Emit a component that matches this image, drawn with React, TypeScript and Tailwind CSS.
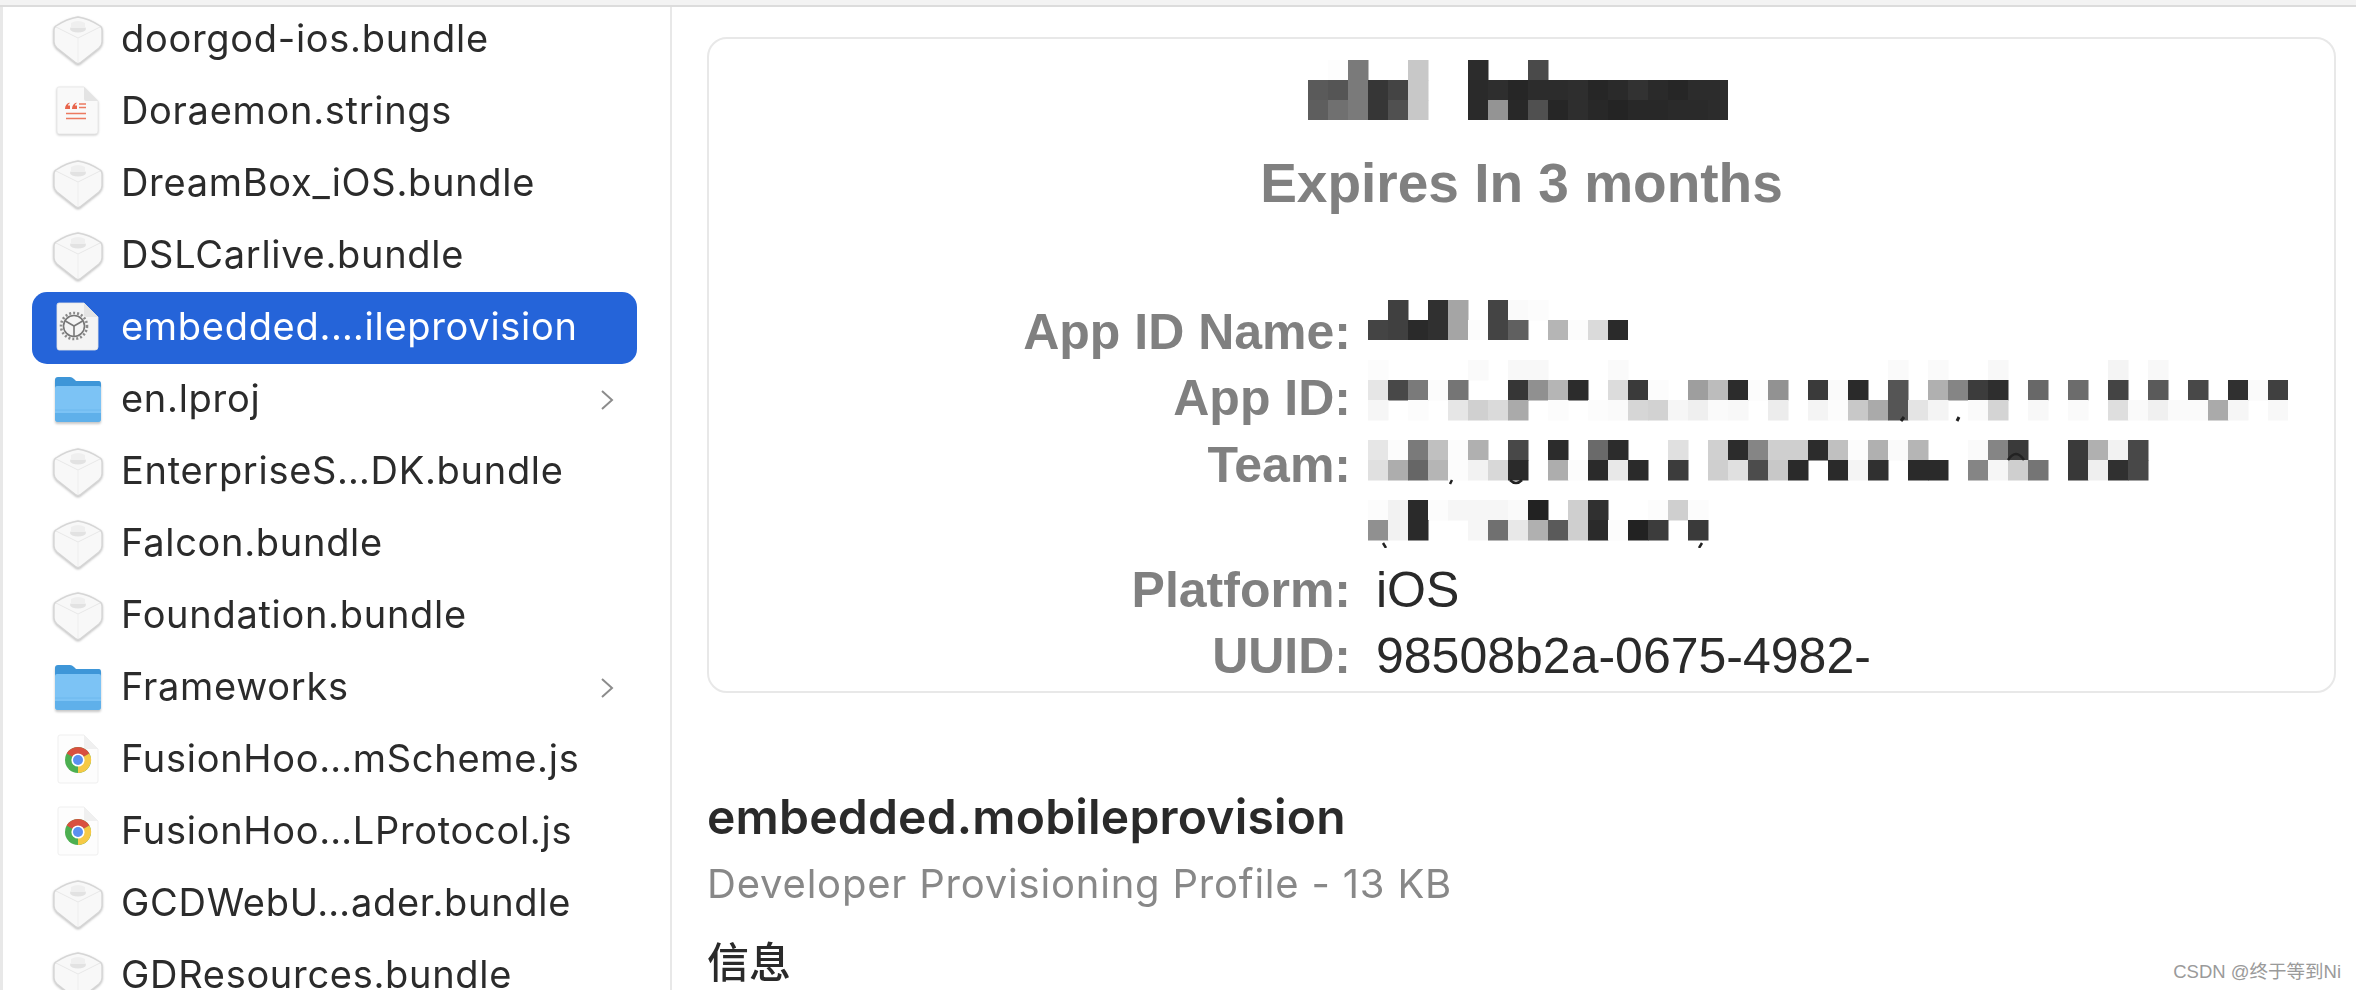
import React from "react";

type Kind = "bundle" | "strings" | "provision" | "folder" | "chrome";

const files: { name: string; kind: Kind; selected?: boolean }[] = [
  { name: "doorgod-ios.bundle", kind: "bundle" },
  { name: "Doraemon.strings", kind: "strings" },
  { name: "DreamBox_iOS.bundle", kind: "bundle" },
  { name: "DSLCarlive.bundle", kind: "bundle" },
  { name: "embedded.…ileprovision", kind: "provision", selected: true },
  { name: "en.lproj", kind: "folder" },
  { name: "EnterpriseS…DK.bundle", kind: "bundle" },
  { name: "Falcon.bundle", kind: "bundle" },
  { name: "Foundation.bundle", kind: "bundle" },
  { name: "Frameworks", kind: "folder" },
  { name: "FusionHoo…mScheme.js", kind: "chrome" },
  { name: "FusionHoo…LProtocol.js", kind: "chrome" },
  { name: "GCDWebU…ader.bundle", kind: "bundle" },
  { name: "GDResources.bundle", kind: "bundle" },
];

// Each mosaic row is a list of grey levels, "" means the cell stays white
const titleCells = [
  ["", "fdfdfd", "7a7a7a", "", "", "c8c8c8", "", "", "2c2c2c", "", "", "4a4a4a"],
  ["5a5a5a", "555555", "7a7a7a", "363636", "444444", "c8c8c8", "", "", "2a2a2a", "2e2e2e", "262626", "2c2c2c", "2c2c2c", "2e2e2e", "262626", "2a2a2a", "323232", "2a2a2a", "262626", "2c2c2c", "2c2c2c"],
  ["5e5e5e", "707070", "7a7a7a", "363636", "505050", "c8c8c8", "", "", "2a2a2a", "949494", "282828", "505050", "262626", "2e2e2e", "282828", "242424", "282828", "282828", "2a2a2a", "2a2a2a", "2c2c2c"],
];

const appNameCells = [
  ["", "404040", "", "303030", "a5a5a5", "", "444444", "fafafa", "fcfcfc"],
  ["444444", "404040", "2a2a2a", "303030", "a5a5a5", "fcfcfc", "444444", "606060", "", "b5b5b5", "fcfcfc", "dadada", "2a2a2a"],
];

const appIdCells = [
  ["fcfcfc", "", "", "", "", "fafafa", "", "f8f8f8", "f8f8f8", "", "", "", "fafafa", "", "", "", "", "", "", "", "", "", "", "", "", "", "fafafa", "", "fafafa", "", "", "f8f8f8", "", "", "", "", "", "f4f4f4", "", "f8f8f8"],
  ["e6e6e6", "484848", "7a7a7a", "fcfcfc", "757575", "", "", "363636", "909090", "b5b5b5", "2c2c2c", "", "dcdcdc", "3a3a3a", "fcfcfc", "", "9e9e9e", "bcbcbc", "2c2c2c", "fcfcfc", "929292", "", "3a3a3a", "fafafa", "2a2a2a", "", "555555", "", "b0b0b0", "858585", "3c3c3c", "2e2e2e", "", "686868", "", "6c6c6c", "", "444444", "", "5a5a5a", "", "484848", "", "303030", "fafafa", "404040"],
  ["f6f6f6", "", "fcfcfc", "", "e6e6e6", "d0d0d0", "dadada", "aaaaaa", "", "fcfcfc", "", "fcfcfc", "fafafa", "d6d6d6", "d2d2d2", "f6f6f6", "efefef", "fafafa", "f8f8f8", "", "ececec", "", "f4f4f4", "fcfcfc", "c8c8c8", "aaaaaa", "555555", "e4e4e4", "f4f4f4", "", "fafafa", "d4d4d4", "", "f8f8f8", "", "fafafa", "", "dedede", "fafafa", "f0f0f0", "fafafa", "fafafa", "aaaaaa", "f6f6f6", "", "f8f8f8"],
];

const teamCells = [
  ["e6e6e6", "fcfcfc", "7a7a7a", "c0c0c0", "fcfcfc", "b0b0b0", "", "484848", "", "2c2c2c", "", "6a6a6a", "2c2c2c", "", "", "e0e0e0", "", "d0d0d0", "2c2c2c", "858585", "cfcfcf", "cfcfcf", "2c2c2c", "c0c0c0", "fcfcfc", "b0b0b0", "fafafa", "b5b5b5", "", "", "fafafa", "858585", "3a3a3a", "", "", "3a3a3a", "b0b0b0", "f2f2f2", "484848"],
  ["e0e0e0", "adadad", "666666", "b5b5b5", "fcfcfc", "f2f2f2", "d8d8d8", "2a2a2a", "", "adadad", "fcfcfc", "2a2a2a", "e8e8e8", "2a2a2a", "", "3c3c3c", "", "cfcfcf", "e0e0e0", "4c4c4c", "c8c8c8", "2a2a2a", "", "2a2a2a", "f4f4f4", "303030", "", "2a2a2a", "2a2a2a", "", "858585", "f6f6f6", "cfcfcf", "757575", "", "383838", "efefef", "303030", "484848"],
  [],
  ["fcfcfc", "f2f2f2", "2a2a2a", "fcfcfc", "f6f6f6", "f6f6f6", "f6f6f6", "fafafa", "222222", "", "cfcfcf", "303030", "", "", "fcfcfc", "cfcfcf", "fcfcfc"],
  ["909090", "f2f2f2", "2a2a2a", "", "", "f6f6f6", "707070", "e8e8e8", "b0b0b0", "5a5a5a", "cfcfcf", "2a2a2a", "fcfcfc", "222222", "3c3c3c", "", "3a3a3a"],
];

function Mosaic({ cells, width, height, children, className }: { cells: string[][]; width: number; height: number; children?: React.ReactNode; className?: string }) {
  return (
    <svg width={width} height={height} viewBox={`0 0 ${width} ${height}`} className={className}>
      {cells.map((row, y) =>
        row.map((c, x) => (c ? <rect key={`${x}-${y}`} x={x * 20} y={y * 20} width={20.5} height={20.5} fill={`#${c}`} /> : null)),
      )}
      {children}
    </svg>
  );
}

function BundleIcon() {
  return (
    <svg width="52" height="52" viewBox="0 0 52 52" className="drop-shadow-[0_1px_1px_rgba(0,0,0,0.25)]">
      <path d="M26 3 C 33 4 42 8 48 12 Q 50 13 50 16 L 50 28 Q 50 31 47 34 L 28 49 Q 26 50 24 49 L 5 34 Q 2 31 2 28 L 2 16 Q 2 13 4 12 C 10 8 19 4 26 3 Z" fill="#f8f8f8" stroke="#d6d6d6" strokeWidth="1.4" />
      <path d="M4 13 L26 24 L48 13" fill="none" stroke="#e8e8e8" strokeWidth="1" />
      <path d="M26 24 L26 49" fill="none" stroke="#eeeeee" strokeWidth="1" />
      <ellipse cx="26" cy="15" rx="8" ry="3.4" fill="#e2e2e2" />
      <path d="M19 14 L19 9 Q26 5 33 9 L33 14" fill="#efefef" />
    </svg>
  );
}

function PageShape({ fill = "#f9f9f9" }: { fill?: string }) {
  return (
    <>
      <path d="M7 1 L32 1 L46 15 L46 45 Q46 48 43 48 L7 48 Q5 48 5 45 L5 3 Q5 1 7 1 Z" fill={fill} stroke="#e6e6e6" strokeWidth="0.8" />
      <path d="M32 1 L46 15 L34 15 Q32 15 32 13 Z" fill="#e4e4e4" />
    </>
  );
}

function StringsIcon() {
  return (
    <svg width="52" height="52" viewBox="0 0 52 52" className="drop-shadow-[0_1px_1px_rgba(0,0,0,0.2)]">
      <PageShape />
      <path d="M17.5 16.5 Q13 18 13 23 L18 23 L18 19.5 L16 19.5 Q16 18 17.5 17.5 Z M24.5 16.5 Q20 18 20 23 L25 23 L25 19.5 L23 19.5 Q23 18 24.5 17.5 Z" fill="#e8654c" />
      <path d="M27 18 H34 M27 21.5 H34 M14 27.5 H34 M14 32.5 H34" stroke="#ec7a60" strokeWidth="1.5" />
    </svg>
  );
}

function ProvisionIcon() {
  const spokes = [90, 210, 330];
  return (
    <svg width="52" height="52" viewBox="0 0 52 52">
      <PageShape fill="#f4f4f4" />
      <circle cx="22" cy="24" r="13" fill="none" stroke="#8a8a8a" strokeWidth="2.6" strokeDasharray="2 2" />
      <circle cx="22" cy="24" r="10.5" fill="none" stroke="#777777" strokeWidth="1.6" />
      {spokes.map((a) => (
        <line key={a} x1="22" y1="24" x2={22 + 10 * Math.cos((a * Math.PI) / 180)} y2={24 + 10 * Math.sin((a * Math.PI) / 180)} stroke="#777777" strokeWidth="1.6" />
      ))}
    </svg>
  );
}

function FolderIcon() {
  return (
    <svg width="52" height="52" viewBox="0 0 52 52" className="drop-shadow-[0_2px_1px_rgba(0,0,0,0.22)]">
      <path d="M3 6 Q3 3 6 3 L18 3 Q20 3 22 5 L24 7 L47 7 Q49 7 49 10 L49 20 L3 20 Z" fill="#3e96d8" />
      <path d="M3 14 Q3 12 5 12 L47 12 Q49 12 49 14 L49 45 Q49 48 46 48 L6 48 Q3 48 3 45 Z" fill="#7cc3f5" />
      <path d="M3 39 L49 39 L49 45 Q49 48 46 48 L6 48 Q3 48 3 45 Z" fill="#5fb0ea" />
      <path d="M3 36 H49" stroke="#6cb8ee" strokeWidth="1" />
    </svg>
  );
}

function ChromeIcon() {
  return (
    <svg width="52" height="52" viewBox="0 0 52 52">
      <path d="M8 1 L32 1 L46 15 L46 47 Q46 49 44 49 L8 49 Q6 49 6 47 L6 3 Q6 1 8 1 Z" fill="#fdfdfd" stroke="#efefef" strokeWidth="1" />
      <path d="M32 1 L46 15 L34 15 Q32 15 32 13 Z" fill="#f0f0f0" />
      <circle cx="26" cy="26" r="13" fill="#4caf50" />
      <path d="M26 26 L14.7 19.5 A13 13 0 0 1 37.3 19.5 Z" fill="#d9503f" />
      <path d="M26 26 L37.3 19.5 A13 13 0 0 1 26 39 Z" fill="#f6c945" />
      <circle cx="26" cy="26" r="6.6" fill="#ffffff" />
      <circle cx="26" cy="26" r="5" fill="#5b90f0" />
    </svg>
  );
}

function FileIcon({ kind }: { kind: Kind }) {
  if (kind === "bundle") return <BundleIcon />;
  if (kind === "strings") return <StringsIcon />;
  if (kind === "provision") return <ProvisionIcon />;
  if (kind === "folder") return <FolderIcon />;
  return <ChromeIcon />;
}

function Chevron() {
  return (
    <svg width="14" height="22" viewBox="0 0 14 22" className="mr-[23px] ml-auto">
      <path d="M2 2 L12 11 L2 20" fill="none" stroke="#8c8c8c" strokeWidth="2" />
    </svg>
  );
}

function FileRow({ name, kind, selected }: { name: string; kind: Kind; selected?: boolean }) {
  return (
    <div className={`flex h-[72px] items-center gap-[17px] rounded-[15px] pl-[20px] ${selected ? "bg-[#2564d9] text-white" : "text-[#2b2b2b]"}`}>
      <FileIcon kind={kind} />
      <span className="-mt-[3px] text-[38px] tracking-[0.7px] whitespace-nowrap">{name}</span>
      {kind === "folder" && <Chevron />}
    </div>
  );
}

function InfoRow({ label, rowClass, children }: { label: string; rowClass: string; children: React.ReactNode }) {
  return (
    <div className={`flex ${rowClass}`}>
      <div className="w-[642px] shrink-0 text-right font-bold text-[#808080]">{label}</div>
      <div className="ml-[17px] min-w-0">{children}</div>
    </div>
  );
}

export default function App() {
  return (
    <div className="relative flex h-[990px] w-[2356px] flex-col overflow-hidden bg-white font-['Inter',sans-serif]">
      <div className="h-[7px] shrink-0 border-b-2 border-[#dcdcdc] bg-[#f3f3f3]" />
      <div className="flex min-h-0 flex-1 blur-[0.5px]">
        {/* file list */}
        <div className="w-[672px] shrink-0 border-r-2 border-l-[3px] border-r-[#e8e8e8] border-l-[#e8e8e8] pr-[33px] pl-[29px]">
          <div className="-mt-[3px]">
            {files.map((f) => (
              <FileRow key={f.name} {...f} />
            ))}
          </div>
        </div>

        {/* preview pane */}
        <div className="min-w-0 flex-1 pt-[30px] pr-[20px] pl-[35px]">
          <div className="h-[656px] rounded-[20px] border-2 border-[#e8e8e8] font-['Liberation_Sans',sans-serif] text-[50px] leading-[67px] text-[#2a2a2a]">
            <div className="flex justify-center pt-[21px] pr-[8px]">
              <Mosaic cells={titleCells} width={420} height={60} />
            </div>
            <div className="mt-[31px] text-center text-[55px] leading-[64px] font-bold text-[#808080]">Expires In 3 months</div>
            <div className="mt-[84px]">
              <InfoRow label="App ID Name:" rowClass="h-[66px]">
                <Mosaic cells={appNameCells} width={260} height={40} className="mt-[1px]" />
              </InfoRow>
              <InfoRow label="App ID:" rowClass="h-[67px]">
                <Mosaic cells={appIdCells} width={920} height={62} className="-mt-[5px]">
                  <path d="M536 57 L533 61 M591 57 L589 61" stroke="#222222" strokeWidth="3" />
                </Mosaic>
              </InfoRow>
              <InfoRow label="Team:" rowClass="h-[125px]">
                <Mosaic cells={teamCells} width={800} height={108} className="mt-[8px]">
                  <path d="M84 40 L82 44 M142 40 Q148 46 154 40 M640 20 Q648 8 656 20" fill="none" stroke="#222222" strokeWidth="2.5" />
                  <path d="M15 103 L18 108 M334 103 L331 108" fill="none" stroke="#222222" strokeWidth="2.5" />
                </Mosaic>
              </InfoRow>
              <InfoRow label="Platform:" rowClass="h-[66px]">
                <span className="pl-[8px]">iOS</span>
              </InfoRow>
              <InfoRow label="UUID:" rowClass="h-[67px]">
                <span className="pl-[8px]">98508b2a-0675-4982-</span>
              </InfoRow>
            </div>
          </div>

          <div className="mt-[96px] text-[48px] leading-[56px] font-semibold tracking-[0.2px] text-[#2a2a2a]">embedded.mobileprovision</div>
          <div className="mt-[16px] text-[40px] leading-[46px] tracking-[0.8px] text-[#888888]">Developer Provisioning Profile - 13 KB</div>
          <div className="mt-[29px] font-['Noto_Sans_CJK_SC',sans-serif] text-[42px] leading-[48px] font-medium text-[#2a2a2a]">信息</div>
        </div>
      </div>

      {/* watermark */}
      <div className="absolute right-[15px] bottom-[7px] font-['Liberation_Sans','Noto_Sans_CJK_SC',sans-serif] text-[18.5px] leading-[22px] text-[#9a9a9a]">CSDN @终于等到Ni</div>
    </div>
  );
}
